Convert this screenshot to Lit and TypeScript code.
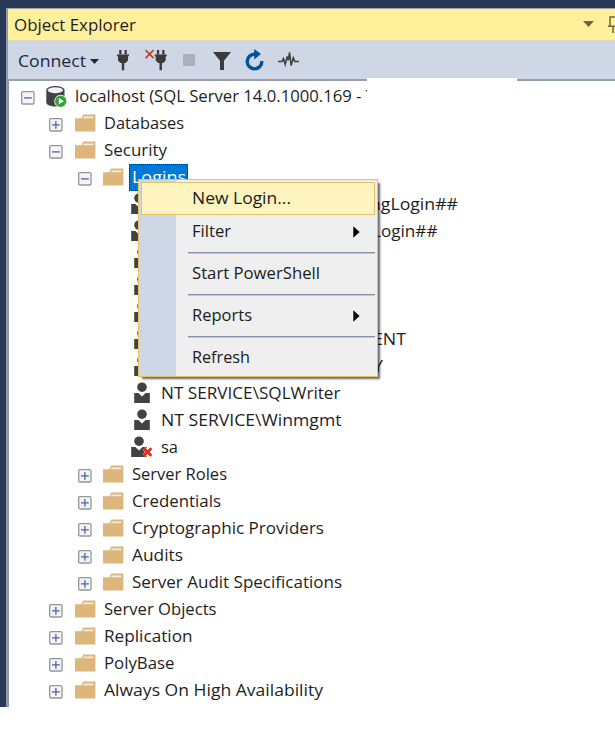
import { LitElement, html, svg, css, nothing } from "lit";
import { customElement, property } from "lit/decorators.js";
import { classMap } from "lit/directives/class-map.js";
import { styleMap } from "lit/directives/style-map.js";

/** A line of text whose glyphs are condensed to a given width. */
@customElement("fit-text")
class FitText extends LitElement {
  @property() text = "";
  @property({ type: Number }) w = 0;

  static styles = css`
    :host { display: block; white-space: pre; }
    .t { display: inline-block; transform-origin: 0 50%; white-space: pre; }
  `;

  updated() {
    const el = this.renderRoot.querySelector(".t") as HTMLElement;
    this.style.width = `${this.w}px`;
    if (this.w && el.offsetWidth) {
      el.style.transform = "none";
      const k = this.w / el.getBoundingClientRect().width;
      el.style.transform = `scaleX(${k})`;
    }
  }

  render() {
    return html`<span class="t">${this.text}</span>`;
  }
}

type Icon = "server" | "folder" | "cert" | "user" | "disabled";
interface Node {
  level: number;
  icon: Icon;
  text: string;
  w: number;
  /** distance from the usual label start to the first visible letter */
  inset?: number;
  open?: boolean;
  selected?: boolean;
}

const folder = (level: number, text: string, w: number, open = false, selected = false): Node =>
  ({ level, icon: "folder", text, w, open, selected });
const login = (icon: Icon, text: string, w: number, inset = 0): Node =>
  ({ level: 3, icon, text, w, inset });

const NODES: Node[] = [
  { level: 0, icon: "server", text: "localhost (SQL Server 14.0.1000.169 - T", w: 300, open: true },
  folder(1, "Databases", 80),
  folder(1, "Security", 63, true),
  folder(2, "Logins", 54, true, true),
  login("cert", "ngLogin##", 88, 209),
  login("cert", "Login##", 65.5, 211.5),
  login("user", "", 0),
  login("user", "", 0),
  login("user", "", 0),
  login("user", "ENT", 33, 212.5),
  login("user", "Y", 10, 212),
  login("user", "NT SERVICE\\SQLWriter", 179.5),
  login("user", "NT SERVICE\\Winmgmt", 180.5),
  login("disabled", "sa", 17),
  folder(2, "Server Roles", 95),
  folder(2, "Credentials", 89),
  folder(2, "Cryptographic Providers", 192),
  folder(2, "Audits", 51),
  folder(2, "Server Audit Specifications", 210),
  folder(1, "Server Objects", 112.5),
  folder(1, "Replication", 88.5),
  folder(1, "PolyBase", 70.5),
  folder(1, "Always On High Availability", 219),
];

const person = svg`
  <circle cx="8" cy="5.2" r="4.8" fill="#424242"/>
  <path d="M0.2 11h4.2L8 14.4l3.6-3.4h4.2v10H0.2z" fill="#424242"/>`;

const ICONS: Record<Icon, unknown> = {
  server: html`<svg class="ic server" width="21" height="22" viewBox="0 0 21 22">
    <path d="M0.3 4v12.6C0.3 19 4.5 20.6 9.5 20.6c5 0 9-1.6 9-4V4z" fill="#424242"/>
    <ellipse cx="9.4" cy="4" rx="9.1" ry="4" fill="#424242"/>
    <ellipse cx="9.4" cy="4.2" rx="7.6" ry="3" fill="#f0f0f0"/>
    <circle cx="14.7" cy="15.2" r="6.4" fill="#fff"/>
    <circle cx="14.7" cy="15.2" r="5.7" fill="#38a239"/>
    <path d="M12.8 12.1v6.2l5-3.1z" fill="#fff"/></svg>`,
  folder: html`<svg class="ic folder" width="21" height="18" viewBox="0 0 21 18">
    <path d="M0 4.2h6.3L8.2 0.6H20.4V17.4H0z" fill="#dcb67a"/>
    <path d="M8.6 2.4h9.8v1.8H7.6z" fill="#f4ece0"/></svg>`,
  cert: html`<svg class="ic cert" width="16" height="21" viewBox="0 0 16 21">${person}</svg>`,
  user: html`<svg class="ic user" width="16" height="21" viewBox="0 0 16 21">${person}</svg>`,
  disabled: html`<svg class="ic cert" width="22" height="21" viewBox="0 0 22 21">${person}
    <path d="M13 12.6l7 7M20 12.6l-7 7" stroke="#fff" stroke-width="3.6"/>
    <path d="M12.6 12.2l7.8 7.6M20.4 12.2l-7.8 7.6" stroke="#e8261a" stroke-width="2.7"/></svg>`,
};

@customElement("tree-row")
class TreeRow extends LitElement {
  @property({ attribute: false }) node!: Node;

  static styles = css`
    :host { display: block; height: 27px; }
    .row { display: flex; height: 27px; align-items: center; }
    .toggle { flex: none; width: 25px; height: 27px; display: flex; align-items: center; }
    .box { display: block; margin: 3px 0 0 0; }
    .iconcell { flex: none; width: 29.5px; height: 27px; }
    .ic { display: block; }
    .server { margin: 3px 0 0 0.8px; }
    .folder { margin: 4px 0 0 0.5px; }
    .cert { margin: 2px 0 0 -0.5px; }
    .user { margin: 2px 0 0 2.5px; }
    .label { height: 27px; line-height: 26px; }
    .selected {
      background: #0078d7; color: #fff; height: 27px; box-sizing: border-box;
      margin: -1px 0 0 -3.5px; padding: 0 1px 0 2.5px; border: 1px dotted #f08a2c;
      outline: 1px dotted #1d1d1d; outline-offset: -1px; line-height: 23px;
    }
  `;

  render() {
    const n = this.node;
    return html`<div class="row" style=${styleMap({ paddingLeft: `${n.level * 28.5}px` })}>
      <div class="toggle">
        ${n.level < 3
          ? html`<svg class="box" width="14" height="14" viewBox="0 0 14 14">
              <rect x="0.7" y="0.7" width="12.3" height="12.3" rx="1.2" fill="#f5f5f5" stroke="#969696" stroke-width="1.3"/>
              <path d=${n.open ? "M3 6.9h7.8" : "M3 6.9h7.8M6.9 3v7.8"} stroke="#4a63ae" stroke-width="1.3"/></svg>`
          : nothing}
      </div>
      <div class="iconcell">${ICONS[n.icon]}</div>
      ${n.text
        ? html`<div
            class=${classMap({ label: true, selected: !!n.selected })}
            style=${n.inset ? styleMap({ marginLeft: `${n.inset}px` }) : nothing}
          ><fit-text .text=${n.text} .w=${n.w}></fit-text></div>`
        : nothing}
    </div>`;
  }
}

interface Item { text: string; w: number; sub?: boolean; hot?: boolean; sep?: boolean }
const MENU: Item[] = [
  { text: "New Login...", w: 99, hot: true },
  { text: "Filter", w: 39, sub: true, sep: true },
  { text: "Start PowerShell", w: 128, sep: true },
  { text: "Reports", w: 60, sub: true, sep: true },
  { text: "Refresh", w: 58 },
];

@customElement("context-menu")
class ContextMenu extends LitElement {
  static styles = css`
    :host { display: block; }
    .menu {
      box-sizing: border-box; width: 240px; height: 198px; padding: 2px;
      border: 1px solid #e5c365;
      background: linear-gradient(90deg, #cfd6e5 36.5px, #efefef 36.5px);
      box-shadow: 3px 3px 2px -1px rgba(0, 0, 0, 0.6);
    }
    .item { box-sizing: border-box; height: 33px; display: flex; align-items: center; padding: 0 15px 2px 50.5px; justify-content: space-between; line-height: 30px; color: #1b1b1b; }
    .hot { background: #fdf4bf; border: 1px solid #e5c365; padding-left: 49.5px; }
    .sub { display: block; margin-top: 2px; }
    .sep { height: 9px; display: flex; align-items: center; padding-left: 46.5px; }
    .line { flex: 1; height: 1px; background: #8591ab; box-shadow: 0 1px 0 #c3c8d3; }
  `;

  render() {
    return html`<div class="menu">
      ${MENU.map((m) => html`
        <div class=${classMap({ item: true, hot: !!m.hot })}>
          <fit-text .text=${m.text} .w=${m.w}></fit-text>
          ${m.sub ? html`<svg class="sub" width="7" height="12" viewBox="0 0 7 12"><path d="M0.3 0.3v11.4L6.6 6z" fill="#000"/></svg>` : nothing}
        </div>
        ${m.sep ? html`<div class="sep"><div class="line"></div></div>` : nothing}`)}
    </div>`;
  }
}

const plug = svg`<path d="M2.2 0h2.3v4.2H2.2zM7.5 0h2.3v4.2H7.5zM0 4.4h12v1.8h-1v4.2L8.6 13H7.2v7.3H4.8V13H3.4L1 10.4V6.2H0z" fill="#3b3b3b"/>`;

@customElement("app-root")
class AppRoot extends LitElement {
  static styles = css`
    :host {
      display: block; position: relative; width: 615px; height: 729px; overflow: hidden;
      background: #fff; color: #1e1e1e;
      font: 17px "Open Sans", "Noto Sans", sans-serif;
    }
    .frame { box-sizing: border-box; height: 707px; background: #293955; padding: 8px 0 0 6px; }
    .panel { box-sizing: border-box; height: 699px; border-left: 3px solid #8d97ae; background: #fff; display: flex; flex-direction: column; }
    .title { box-sizing: border-box; margin-left: -1px; height: 33px; flex: none; border-top: 1px solid #a3a6ab; border-bottom: 1px solid #e2dcbc; background: #fff09b; display: flex; justify-content: space-between; align-items: center; padding-left: 5.5px; line-height: 31px; }
    .winbtns { display: flex; gap: 14.5px; align-items: center; }
    .arrow { margin-top: -2px; }
    .pin { margin-top: -1px; }
    .tools { box-sizing: border-box; margin-left: -1px; height: 40px; flex: none; background: #cfd6e5; border-bottom: 2px solid #9a9fac; display: flex; align-items: flex-start; padding-left: 10px; }
    .connect { color: #1b293e; line-height: 40px; width: 72px; }
    .tool { display: block; flex: none; }
    .caret { margin: 18px 18px 0 0; }
    .plug { margin: 9px 16px 0 0; }
    .unplug { margin: 8px 16px 0 0; }
    .stop { flex: none; width: 12px; height: 12px; background: #adb0b8; margin: 13px 18px 0 0; }
    .filter { margin: 11px 14px 0 0; }
    .refresh { margin: 8px 13.5px 0 0; }
    .pulse { margin: 10px 0 0 0; }
    .tree { padding: 2px 0 0 11.5px; }
    .menu { position: absolute; left: 138px; top: 179px; }
    .patch { position: absolute; left: 367px; top: 78px; width: 150px; height: 31px; background: #fff; }
  `;

  render() {
    return html`
      <div class="frame">
        <div class="panel">
          <div class="title">
            <fit-text .text=${"Object Explorer"} .w=${122}></fit-text>
            <div class="winbtns">
              <svg class="arrow" width="11" height="6" viewBox="0 0 11 6"><path d="M0 0h11L5.5 6z" fill="#75633d"/></svg>
              <svg class="pin" width="7" height="17" viewBox="0 0 7 17"><path d="M2 10V1h5M0 10.2h7M5 10v7" fill="none" stroke="#75633d" stroke-width="1.5"/></svg>
            </div>
          </div>
          <div class="tools">
            <div class="connect"><fit-text .text=${"Connect"} .w=${68}></fit-text></div>
            <svg class="tool caret" width="9" height="5" viewBox="0 0 9 5"><path d="M0 0h9L4.5 5z" fill="#1b293e"/></svg>
            <svg class="tool plug" width="12" height="21" viewBox="0 0 12 21">${plug}</svg>
            <svg class="tool unplug" width="22" height="22" viewBox="0 0 22 22">
              <path d="M0.6 1.2l8 8M8.6 1.2l-8 8" stroke="#b8432a" stroke-width="1.7"/>
              <g transform="translate(9.7 1)">${plug}</g></svg>
            <div class="stop"></div>
            <svg class="tool filter" width="18" height="18" viewBox="0 0 18 18"><path d="M0 0h18l-7 8.8V18H7V8.8z" fill="#3b3b3b"/></svg>
            <svg class="tool refresh" width="19" height="22" viewBox="0 0 19 22">
              <path d="M10.5 5.3A7.3 7.3 0 1 0 16.8 12" fill="none" stroke="#00539c" stroke-width="3.4"/>
              <path d="M9.2 0l6.8 5-6.8 5.6z" fill="#00539c"/></svg>
            <svg class="tool pulse" width="21" height="18" viewBox="0 0 21 18"><path d="M0 10.5h4l1.5-2.8 1.7 5.6L9.3 5.4l1 4L11.6 1.5l1.5 13 2.2-7.6 1.5 3.6H21" fill="none" stroke="#424242" stroke-width="1.6"/></svg>
          </div>
          <div class="tree">${NODES.map((n) => html`<tree-row .node=${n}></tree-row>`)}</div>
        </div>
      </div>
      <div class="patch"></div>
      <context-menu class="menu"></context-menu>`;
  }
}
